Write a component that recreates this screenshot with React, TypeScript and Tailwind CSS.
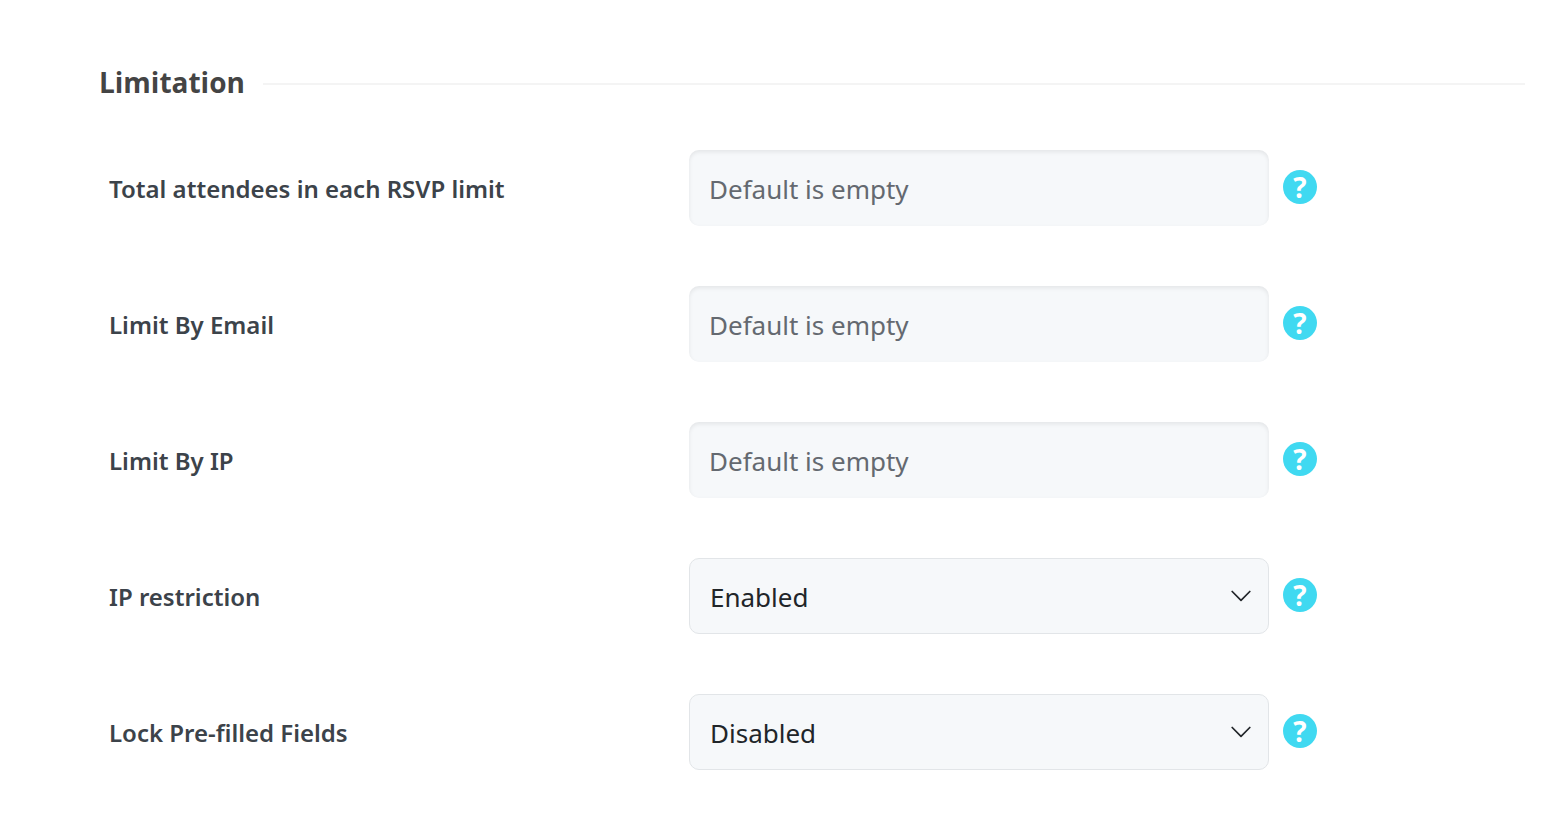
import React, { useState } from 'react';

interface LimitationForm {
  totalAttendees: string;
  limitByEmail: string;
  limitByIp: string;
  ipRestriction: string;
  lockPrefilled: string;
}

interface FieldConfig {
  name: keyof LimitationForm;
  label: string;
  type: 'text' | 'select';
}

const FIELDS: FieldConfig[] = [
  { name: 'totalAttendees', label: 'Total attendees in each RSVP limit', type: 'text' },
  { name: 'limitByEmail', label: 'Limit By Email', type: 'text' },
  { name: 'limitByIp', label: 'Limit By IP', type: 'text' },
  { name: 'ipRestriction', label: 'IP restriction', type: 'select' },
  { name: 'lockPrefilled', label: 'Lock Pre-filled Fields', type: 'select' },
];

const STATUS_OPTIONS = ['Enabled', 'Disabled'];

const controlBase = 'block w-full h-19 rounded-[10px] bg-[#f6f8fa] px-5 pt-[2px] text-[26px] outline-none focus:ring-2 focus:ring-[#40d9f1]/40';

function HelpButton({ label }: { label: string }) {
  return (
    <button
      type="button"
      aria-label={`Help: ${label}`}
      className="flex size-[34px] shrink-0 cursor-pointer items-center justify-center rounded-full bg-[#40d9f1] font-['Open_Sans',sans-serif] text-[28px] leading-none font-bold text-white"
    >
      ?
    </button>
  );
}

function ChevronIcon() {
  return (
    <svg
      viewBox="0 0 20 12"
      className="pointer-events-none absolute top-1/2 right-[18px] h-3 w-5 -translate-y-1/2"
      fill="none"
      stroke="#212529"
      strokeWidth="1.7"
      strokeLinecap="round"
      strokeLinejoin="round"
      aria-hidden="true"
    >
      <path d="M1.2 1.5 L10 10.3 L18.8 1.5" />
    </svg>
  );
}

export default function App() {
  const [form, setForm] = useState<LimitationForm>({
    totalAttendees: '',
    limitByEmail: '',
    limitByIp: '',
    ipRestriction: 'Enabled',
    lockPrefilled: 'Disabled',
  });

  const updateForm = (field: keyof LimitationForm) => (e: React.ChangeEvent<HTMLInputElement | HTMLSelectElement>) => {
    setForm((prev) => ({ ...prev, [field]: e.target.value }));
  };

  return (
    <main className="min-h-screen bg-white pt-16 pr-10 pb-13 pl-[99px] font-['Noto_Sans',sans-serif]">
      <div className="flex items-center gap-[18px]">
        <h2 className="pb-1 font-['Open_Sans',sans-serif] text-[28px] leading-9 font-bold text-[#444]">Limitation</h2>
        <div className="h-[2px] flex-1 bg-[#f4f4f4]" />
      </div>

      <form className="mt-[46px] flex flex-col gap-15 pl-[10px]" onSubmit={(e) => e.preventDefault()}>
        {FIELDS.map((field) => (
          <div key={field.name} className="grid grid-cols-[580fr_580fr_256fr] items-center">
            <label htmlFor={field.name} className="pt-[2px] pr-4 text-2xl font-semibold text-[#3c434a]">
              {field.label}
            </label>

            {field.type === 'text' ? (
              <input
                id={field.name}
                type="text"
                placeholder="Default is empty"
                value={form[field.name]}
                onChange={updateForm(field.name)}
                className={`${controlBase} text-[#212529] shadow-[inset_0_2px_4px_rgba(0,0,0,0.08)] placeholder:text-[#646970]`}
              />
            ) : (
              <div className="relative">
                <select
                  id={field.name}
                  value={form[field.name]}
                  onChange={updateForm(field.name)}
                  className={`${controlBase} appearance-none border border-[#e2e5e8] text-[#212529]`}
                >
                  {STATUS_OPTIONS.map((option) => (
                    <option key={option} value={option}>{option}</option>
                  ))}
                </select>
                <ChevronIcon />
              </div>
            )}

            <div className="pb-[2px] pl-[14px]">
              <HelpButton label={field.label} />
            </div>
          </div>
        ))}
      </form>
    </main>
  );
}
